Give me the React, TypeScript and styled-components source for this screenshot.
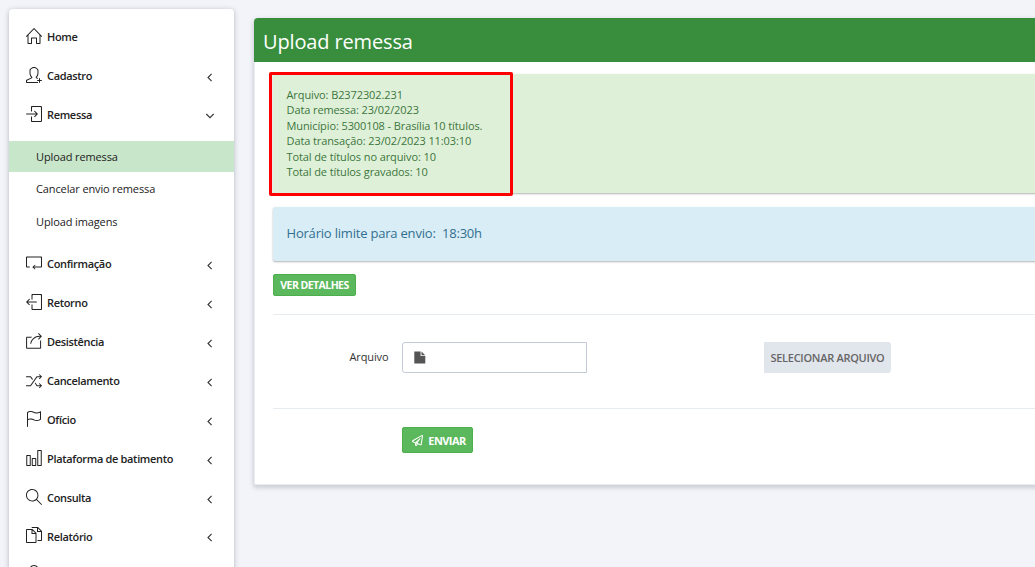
import React from "react";
import styled, { createGlobalStyle } from "styled-components";
import {
  SlHome, SlUserFollow, SlLogin, SlLoop, SlLogout, SlShareAlt, SlShuffle,
  SlFlag, SlChart, SlMagnifier, SlDocs, SlUser,
} from "react-icons/sl";
import { FaRegPaperPlane } from "react-icons/fa";

const GlobalStyle = createGlobalStyle`
  *, *::before, *::after { box-sizing: border-box; }
  body {
    margin: 0;
    background: #f2f4f9;
    font-family: "Open Sans", "Noto Sans", sans-serif;
    font-size: 11px;
    color: #222;
    overflow: hidden;
  }
`;

const Page = styled.div`
  display: flex;
  align-items: flex-start;
  gap: 20px;
  width: 1035px;
  height: 567px;
  padding-left: 9px;
  overflow: hidden;
`;

const Sidebar = styled.nav`
  flex: none;
  width: 225px;
  height: 620px;
  margin-top: 9px;
  padding-top: 8px;
  background: #fff;
  border-radius: 4px;
  box-shadow: 0 1px 5px rgba(60, 65, 75, 0.35);
`;

const MenuItem = styled.a<{ $short?: boolean }>`
  display: flex;
  align-items: center;
  height: ${(p) => (p.$short ? 38 : 39)}px;
  padding: 0 18px 0 17px;
  color: #222;
  font-size: 11px;
  font-weight: 600;
  letter-spacing: -0.33px;
`;

const MenuIcon = styled.span`
  display: flex;
  width: 21px;
  padding-bottom: 2px;
  font-size: 16px;
`;

const MenuLabel = styled.span`
  flex: 1;
  white-space: nowrap;
`;

const Chevron = styled.span`
  display: flex;
  justify-content: center;
  width: 13px;
  padding-top: 3px;
`;

const SubMenu = styled.div`
  margin: 7px 0 6px;
`;

const SubItem = styled.a<{ $active?: boolean }>`
  display: flex;
  align-items: center;
  height: ${(p) => (p.$active ? 31 : 33)}px;
  padding-left: 27px;
  color: #222;
  background: ${(p) => (p.$active ? "#c8e6c9" : "transparent")};
  letter-spacing: -0.12px;
`;

const Panel = styled.main`
  flex: none;
  width: 800px;
  height: 467px;
  margin-top: 18px;
  background: #fff;
  border: 1px solid #e7ecf1;
  border-top: 0;
  border-radius: 4px 4px 2px 2px;
  box-shadow: 0 2px 4px 1px rgba(60, 65, 75, 0.2);
`;

const PanelHeader = styled.h1`
  display: flex;
  align-items: center;
  height: 44px;
  margin: 0 0 0 -1px;
  padding: 2px 0 0 9px;
  color: #fff;
  background: #388e3c;
  border-radius: 4px 4px 0 0;
  font-size: 20px;
  font-weight: 400;
  letter-spacing: -0.14px;
`;

const PanelBody = styled.div`
  padding: 12px 0 0 18px;
`;

const Notice = styled.section<{ $tone: "success" | "info" }>`
  position: relative;
  height: ${(p) => (p.$tone === "success" ? 119 : 54)}px;
  margin-bottom: ${(p) => (p.$tone === "success" ? 14 : 13)}px;
  padding: ${(p) => (p.$tone === "success" ? "13px" : "17px")} 13.5px 0;
  color: ${(p) => (p.$tone === "success" ? "#3c763d" : "#31708f")};
  background: ${(p) => (p.$tone === "success" ? "#dff0d8" : "#d9edf7")};
  border-radius: 2px;
  box-shadow: 0 1px 2px rgba(0, 0, 0, 0.3);
  font-size: ${(p) => (p.$tone === "success" ? 11 : 13)}px;
  letter-spacing: ${(p) => (p.$tone === "success" ? "-0.1px" : "-0.2px")};
  line-height: ${(p) => (p.$tone === "success" ? "15.4px" : "18px")};
  white-space: pre;
`;

const Highlight = styled.div`
  position: absolute;
  top: -2px;
  left: -4px;
  width: 244px;
  height: 124px;
  border: 3px solid #fe0000;
  border-radius: 2px;
`;

const GreenButton = styled.button<{ $large?: boolean }>`
  display: flex;
  align-items: center;
  justify-content: center;
  gap: 5px;
  width: ${(p) => (p.$large ? 71 : 83)}px;
  height: ${(p) => (p.$large ? 26 : 22)}px;
  padding: 0 0 0 ${(p) => (p.$large ? 3 : 0)}px;
  color: #fff;
  background: #5cb85c;
  border: 1px solid #4cae4c;
  border-radius: 2px;
  font-family: inherit;
  font-size: ${(p) => (p.$large ? 11 : 10.5)}px;
  font-weight: 700;
  letter-spacing: -0.55px;
  white-space: nowrap;
`;

const Form = styled.form`
  margin-top: 18px;
`;

const FormRow = styled.div`
  display: flex;
  height: 95px;
  padding-top: 27px;
  border-top: 1px solid #e7ecf1;
  border-bottom: 1px solid #e7ecf1;
`;

const Label = styled.label`
  width: 129px;
  padding: 7px 13.5px 0 0;
  color: #333;
  text-align: right;
  line-height: 15px;
  letter-spacing: -0.1px;
`;

const FileField = styled.div`
  display: flex;
  align-items: center;
  width: 185px;
  height: 31px;
  margin-right: 177px;
  padding-left: 11px;
  border: 1px solid #c2cad8;
  border-radius: 3px 0 0 3px;
  color: #555;
`;

const SelectButton = styled.button`
  width: 127px;
  height: 31px;
  padding: 0;
  border: 0;
  border-radius: 0 3px 3px 0;
  color: #666;
  background: #e1e5ec;
  font-family: inherit;
  font-size: 11px;
  font-weight: 600;
  letter-spacing: -0.28px;
  white-space: nowrap;
`;

const Actions = styled.div`
  padding: 18px 0 0 129px;
`;

type Item = { label: string; Icon: React.ComponentType; arrow?: "left" | "down"; short?: boolean };

const firstItems: Item[] = [
  { label: "Home", Icon: SlHome },
  { label: "Cadastro", Icon: SlUserFollow, arrow: "left" },
  { label: "Remessa", Icon: SlLogin, arrow: "down" },
];

const lastItems: Item[] = [
  { label: "Confirmação", Icon: SlLoop, arrow: "left" },
  { label: "Retorno", Icon: SlLogout, arrow: "left" },
  { label: "Desistência", Icon: SlShareAlt, arrow: "left" },
  { label: "Cancelamento", Icon: SlShuffle, arrow: "left" },
  { label: "Ofício", Icon: SlFlag, arrow: "left" },
  { label: "Plataforma de batimento", Icon: SlChart, arrow: "left" },
  { label: "Consulta", Icon: SlMagnifier, arrow: "left" },
  { label: "Relatório", Icon: SlDocs, arrow: "left", short: true },
  { label: "", Icon: SlUser, short: true },
];

function Arrow({ direction }: { direction: "left" | "down" }) {
  return direction === "left" ? (
    <svg width="6" height="9" viewBox="0 0 6 9" fill="none" stroke="#333" strokeWidth="1.1">
      <path d="M4.6 0.8 1 4.5 4.6 8.2" />
    </svg>
  ) : (
    <svg width="9" height="6" viewBox="0 0 9 6" fill="none" stroke="#333" strokeWidth="1.1">
      <path d="M1.3 1 5 4.7 8.7 1" />
    </svg>
  );
}

function FileIcon() {
  return (
    <svg width="12" height="13" viewBox="0 0 12 13" fill="currentColor">
      <path d="M0.3 0.5H6.6V5H11.3V12.5H0.3Z" />
      <path d="M7.5 0.6 11.2 4.2H7.5Z" />
    </svg>
  );
}

function Menu({ items }: { items: Item[] }) {
  return (
    <>
      {items.map(({ label, Icon, arrow, short }) => (
        <MenuItem key={label} $short={short}>
          <MenuIcon><Icon /></MenuIcon>
          <MenuLabel>{label}</MenuLabel>
          {arrow && <Chevron><Arrow direction={arrow} /></Chevron>}
        </MenuItem>
      ))}
    </>
  );
}

const summary = [
  "Arquivo: B2372302.231",
  "Data remessa: 23/02/2023",
  "Município: 5300108 - Brasília 10 títulos.",
  "Data transação: 23/02/2023 11:03:10",
  "Total de títulos no arquivo: 10",
  "Total de títulos gravados: 10",
];

export default function App() {
  return (
    <>
      <GlobalStyle />
      <Page>
        <Sidebar>
          <Menu items={firstItems} />
          <SubMenu>
            <SubItem $active>Upload remessa</SubItem>
            <SubItem>Cancelar envio remessa</SubItem>
            <SubItem>Upload imagens</SubItem>
          </SubMenu>
          <Menu items={lastItems} />
        </Sidebar>
        <Panel>
          <PanelHeader>Upload remessa</PanelHeader>
          <PanelBody>
            <Notice $tone="success">
              {summary.map((line) => <div key={line}>{line}</div>)}
              <Highlight />
            </Notice>
            <Notice $tone="info">Horário limite para envio:  18:30h</Notice>
            <GreenButton>VER DETALHES</GreenButton>
            <Form>
              <FormRow>
                <Label>Arquivo</Label>
                <FileField><FileIcon /></FileField>
                <SelectButton type="button">SELECIONAR ARQUIVO</SelectButton>
              </FormRow>
              <Actions>
                <GreenButton $large type="button"><FaRegPaperPlane />ENVIAR</GreenButton>
              </Actions>
            </Form>
          </PanelBody>
        </Panel>
      </Page>
    </>
  );
}
